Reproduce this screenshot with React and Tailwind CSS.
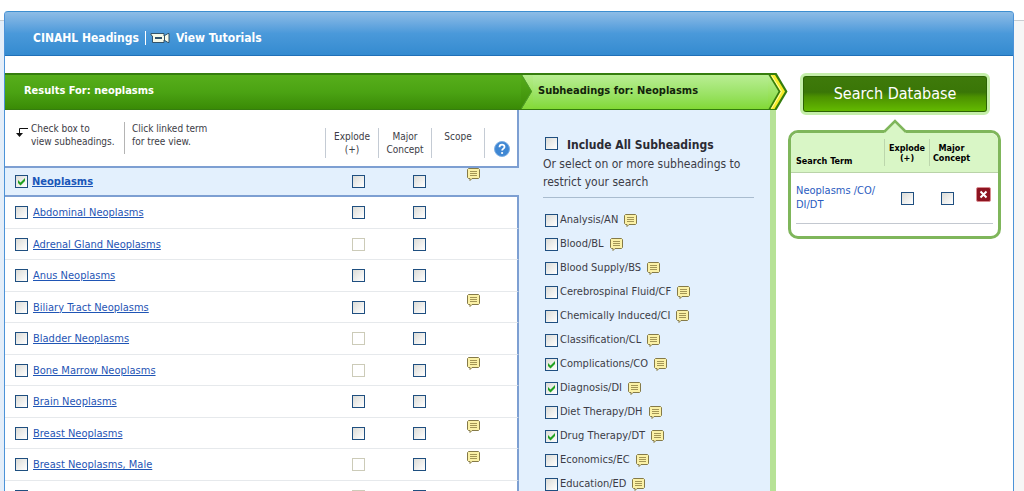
import React, { useState } from "react";

const results = [
  { name: "Abdominal Neoplasms", explode: true },
  { name: "Adrenal Gland Neoplasms" },
  { name: "Anus Neoplasms", explode: true },
  { name: "Biliary Tract Neoplasms", explode: true, scope: true },
  { name: "Bladder Neoplasms" },
  { name: "Bone Marrow Neoplasms", scope: true },
  { name: "Brain Neoplasms", explode: true },
  { name: "Breast Neoplasms", explode: true, scope: true },
  { name: "Breast Neoplasms, Male", scope: true },
  { name: "Bronchial Neoplasms" },
];

const subheadings = [
  { name: "Analysis/AN" },
  { name: "Blood/BL" },
  { name: "Blood Supply/BS" },
  { name: "Cerebrospinal Fluid/CF" },
  { name: "Chemically Induced/CI" },
  { name: "Classification/CL" },
  { name: "Complications/CO", checked: true },
  { name: "Diagnosis/DI", checked: true },
  { name: "Diet Therapy/DH" },
  { name: "Drug Therapy/DT", checked: true },
  { name: "Economics/EC" },
  { name: "Education/ED" },
];

function Check({ id, label, checked = false, disabled = false }) {
  const [on, setOn] = useState(checked);
  return (
    <span className="relative block size-[13px] shrink-0">
      <input
        id={id}
        type="checkbox"
        aria-label={label}
        checked={on}
        disabled={disabled}
        onChange={() => setOn(!on)}
        className="block size-[13px] appearance-none border border-[#1f4f80] bg-linear-to-br from-[#dcdcd7] to-white disabled:border-[#cccbb8] disabled:bg-white disabled:bg-none"
      />
      {on && (
        <svg viewBox="0 0 13 13" className="pointer-events-none absolute inset-0 size-[13px]">
          <path d="M3 5v3l2.5 2.5L10 6V3L5.500 7.500z" fill="#21a121" />
        </svg>
      )}
    </span>
  );
}

function NoteIcon() {
  return (
    <svg viewBox="0 0 13 13" className="block size-[13px] shrink-0">
      <path d="M1.500.5h10l1 1v8l-1 1H5L3 12.500V10.500H1.500l-1-1v-8z" fill="#fbf1a6" stroke="#857a48" />
      <path d="M3 3.500h7M3 5.500h7M3 7.500h7" stroke="#a39555" />
    </svg>
  );
}

function ScopeLink({ name }) {
  return (
    <a href="#scope" aria-label={"Scope note for " + name} className="block">
      <NoteIcon />
    </a>
  );
}

function HelpIcon() {
  return (
    <svg viewBox="0 0 16 16" className="block size-4">
      <circle cx="8" cy="8" r="7.500" fill="#3f87d3" stroke="#7fb0e4" />
      <path d="M5.500 6.200C5.500 2.800 10.700 3 10.500 6c-.1 1.600-2.400 1.700-2.400 3.600" fill="none" stroke="#fff" strokeWidth="1.800" />
      <circle cx="8.100" cy="12" r="1.100" fill="#fff" />
    </svg>
  );
}

function TopBar() {
  return (
    <header className="flex h-[45px] items-center rounded-t-[3px] border-t border-b border-t-[#3c8ed0] border-b-[#2070b8] bg-linear-to-b from-[#8dbce6] via-[#4a99da] via-50% to-[#348bd0] pt-2 pl-7 text-[12px] font-bold text-white">
      <h1>CINAHL Headings</h1>
      <span className="ml-1.5 h-3.5 w-px bg-white" />
      <a href="#tutorials" className="ml-1 flex items-center gap-1.5">
        <svg viewBox="0 0 20 12" className="h-3 w-5">
          <path d="M1 1.500h13V4l4-2.500h1v9h-1L14 8v2.500H2.500V4L1 3z" fill="#f4f8e8" stroke="#31536b" />
          <path d="M5 6h7" stroke="#31536b" strokeWidth="2" />
          <path d="M14.500 3v6" stroke="#31536b" />
        </svg>
        View Tutorials
      </a>
    </header>
  );
}

function StepBar() {
  return (
    <div className="flex h-[37px] text-[11px] font-bold">
      <h2 className="flex flex-1 items-center border-t-2 border-b border-t-[#357d0e] border-b-[#357d0e] bg-linear-to-b from-[#57ae1b] from-0% via-[#4ba313] via-50% to-[#3a8b06] pb-0.5 pl-[19px] text-white">
        Results For: neoplasms
      </h2>
      <svg viewBox="0 0 12 37" className="h-[37px] w-3 shrink-0">
        <defs>
          <linearGradient id="light" x2="0" y2="1">
            <stop offset="0" stopColor="#b9ee93" />
            <stop offset="1" stopColor="#82d934" />
          </linearGradient>
          <linearGradient id="dark" x2="0" y2="1">
            <stop offset="0" stopColor="#57ae1b" />
            <stop offset="1" stopColor="#3a8b06" />
          </linearGradient>
        </defs>
        <path d="M0 0h12v37H0z" fill="url(#light)" />
        <path d="M0 0L11 18.500L0 37z" fill="url(#dark)" />
        <path d="M0 1L10.500 18.500L0 36" fill="none" stroke="#4f9d2a" />
        <path d="M0 1h12" stroke="#357d0e" strokeWidth="2" />
        <path d="M0 36.500h12" stroke="#357d0e" />
      </svg>
      <h2 className="flex w-[235px] items-center border-t-2 border-b border-t-[#357d0e] border-b-[#357d0e] bg-linear-to-b from-[#b9ee93] to-[#82d934] pb-0.5 pl-[5px] text-[#12230a]">
        Subheadings for: Neoplasms
      </h2>
      <svg viewBox="0 0 20 37" className="h-[37px] w-5 shrink-0">
        <path d="M0 0h8.500L19.500 18.500L8.500 37H0z" fill="#357d0e" />
        <path d="M0 2h.5L10.500 18.500L.5 36H0z" fill="url(#light)" />
        <path d="M2.500 2h4.500L17 18.500L6.500 36H2.500L12.500 18.500z" fill="#f7ec2a" />
        <path d="M3.500 2.500L13.500 18.500L3.500 35.500" fill="none" stroke="#fdfbb0" />
      </svg>
    </div>
  );
}

function ResultsTable() {
  const head = "pt-[18px] pb-2 align-top font-normal";
  return (
    <table className="w-full flex-1 table-fixed border-separate border-spacing-0 self-start text-left text-[10px] leading-[13px] text-[#3c3c46]">
      <colgroup>
        <col />
        <col className="w-[53px]" />
        <col className="w-[53px]" />
        <col className="w-[53px]" />
        <col className="w-[35px]" />
      </colgroup>
      <thead>
        <tr className="h-[56px]">
          <th className="pt-3 align-top font-normal">
            <div className="flex pl-[10px]">
              <svg viewBox="0 0 14 14" className="mt-1 size-3.5 shrink-0">
                <path d="M13 2.500H4.500V8" fill="none" stroke="#111" />
                <path d="M1 7h7L4.500 11z" fill="#111" />
              </svg>
              <p className="h-8 w-[96px] border-r border-[#b4b4b4] pl-0.5 whitespace-nowrap">
                Check box to
                <br />
                view subheadings.
              </p>
              <p className="pl-[7px]">
                Click linked term
                <br />
                for tree view.
              </p>
            </div>
          </th>
          <th className={head}>
            <div className="h-[30px] border-l border-[#c4cbd4] px-1 pt-0.5 text-center">
              Explode
              <br />
              (+)
            </div>
          </th>
          <th className={head}>
            <div className="h-[30px] border-l border-[#c4cbd4] px-1 pt-0.5 text-center">
              Major
              <br />
              Concept
            </div>
          </th>
          <th className={head}>
            <div className="h-[30px] border-l border-[#c4cbd4] pt-0.5 text-center">Scope</div>
          </th>
          <th className="border-r-2 border-[#7d9fd2] pt-[18px] align-top">
            <div className="h-[30px] border-l border-[#c4cbd4] pt-[13px] pl-[9px]">
              <button type="button" aria-label="Help" className="block">
                <HelpIcon />
              </button>
            </div>
          </th>
        </tr>
      </thead>
      <tbody>
        <tr className="h-[31px] bg-[#e3f0fd] *:border-y-2 *:border-[#7d9fd2]">
          <td>
            <div className="flex items-center gap-1 pl-[10px]">
              <Check label="Select Neoplasms" checked />
              <a href="#neoplasms" className="text-[11px] font-bold text-[#1a56b8] underline">
                Neoplasms
              </a>
            </div>
          </td>
          <td className="pl-[27px]">
            <Check label="Explode Neoplasms" />
          </td>
          <td className="pl-[35px]">
            <Check label="Major concept Neoplasms" />
          </td>
          <td className="pl-[36px] align-top">
            <ScopeLink name="Neoplasms" />
          </td>
          <td />
        </tr>
        {results.map((r) => (
          <tr key={r.name} className="h-[31px] even:h-[32px] *:border-b *:border-[#e6e9ec]">
            <td>
              <div className="flex items-center gap-[5px] pl-[10px]">
                <Check label={"Select " + r.name} />
                <a href="#term" className="text-[11px] text-[#1f55b5] underline">
                  {r.name}
                </a>
              </div>
            </td>
            <td className="pl-[27px]">
              <Check label={"Explode " + r.name} disabled={!r.explode} />
            </td>
            <td className="pl-[35px]">
              <Check label={"Major concept " + r.name} />
            </td>
            <td className="pt-0.5 pl-[36px] align-top">{r.scope && <ScopeLink name={r.name} />}</td>
            <td className="border-r-2 border-r-[#7d9fd2]!" />
          </tr>
        ))}
      </tbody>
    </table>
  );
}

function Subheadings() {
  return (
    <section className="w-[257px] shrink-0 border-r-[6px] border-[#b6e296] bg-[#e3f0fd] pt-[27px] pr-4 pl-6 text-[11px] text-[#3c3c46]">
      <div className="flex gap-[9px] pl-0.5">
        <Check id="include-all" />
        <label htmlFor="include-all" className="text-[12px] leading-4 font-bold text-[#2a2a33]">
          Include All Subheadings
        </label>
      </div>
      <p className="border-b border-[#a9bccf] pt-0.5 pb-1.5 text-[12px] leading-[18px]">
        Or select on or more subheadings to restrict your search
      </p>
      <ul className="pt-[10px] pl-0.5">
        {subheadings.map((s) => (
          <li key={s.name} className="flex h-6 items-center">
            <Check id={s.name} checked={s.checked} />
            <label htmlFor={s.name} className="pr-1.5 pl-0.5">
              {s.name}
            </label>
            <ScopeLink name={s.name} />
          </li>
        ))}
      </ul>
    </section>
  );
}

function SearchPanel() {
  return (
    <aside className="w-[225px] shrink-0 pr-3">
      <div className="pl-3">
        <button
          type="button"
          className="h-[42px] w-[190px] rounded-md border-[3px] border-[#c5efaa] bg-[linear-gradient(#3f7a0b,#3a7607_45%,#4c9100_58%,#65bd00)] text-[16px] text-white inset-ring inset-ring-[#2c6204]"
        >
          Search Database
        </button>
      </div>
      <div className="relative mt-[15px] rounded-[10px] border-[3px] border-[#7fb65b] bg-white pb-3">
        <svg viewBox="0 0 24 15" className="absolute -top-[14px] left-[92px] h-[15px] w-6">
          <path d="M1 13L12 2L23 13V15H1z" fill="#d9f6c6" />
          <path d="M1 13L12 2L23 13" fill="none" stroke="#7fb65b" strokeWidth="2.500" />
        </svg>
        <table className="w-full table-fixed border-separate border-spacing-0 text-left">
          <colgroup>
            <col />
            <col className="w-[45px]" />
            <col className="w-[44px]" />
            <col className="w-[25px]" />
          </colgroup>
          <thead>
            <tr className="h-[40px] text-[9px] leading-[10px] text-black *:border-b *:border-[#b9d3a8] *:bg-[#d9f6c6]">
              <th className="rounded-tl-lg pb-1.5 pl-[5px] align-bottom">Search Term</th>
              <th className="text-center">
                <div className="h-[27px] border-l border-[#bcd6ac] pt-1">Explode (+)</div>
              </th>
              <th className="text-center">
                <div className="h-[27px] border-l border-[#bcd6ac] pt-1">Major Concept</div>
              </th>
              <th className="rounded-tr-lg" />
            </tr>
          </thead>
          <tbody>
            <tr className="h-[50px] text-[11px] leading-[14px] text-[#2a5cc0]">
              <td className="pl-[5px]">
                Neoplasms /CO/
                <br />
                DI/DT
              </td>
              <td className="pl-[17px]">
                <Check label="Explode search term" />
              </td>
              <td className="pl-3">
                <Check label="Major concept search term" />
              </td>
              <td className="pt-3.5 align-top">
                <button
                  type="button"
                  aria-label="Remove term"
                  className="ml-[3px] block size-[15px] rounded-xs border border-[#d98d92] bg-[#8d1420]"
                >
                  <svg viewBox="0 0 13 13" className="block size-[13px]">
                    <path d="M3.500 3.500l6 6M9.500 3.500L3.500 9.500" stroke="#fff" strokeWidth="2" />
                  </svg>
                </button>
              </td>
            </tr>
          </tbody>
        </table>
        <hr className="mx-[5px] border-[#c3c8d0]" />
      </div>
    </aside>
  );
}

export default function App() {
  return (
    <div className="h-screen overflow-hidden bg-white pt-5 font-['DejaVu_Sans_Condensed','DejaVu_Sans',sans-serif]">
      <div className="h-full border-t border-[#c9cdd2] bg-linear-to-r from-[#e4eef9] from-50% to-[#f6f6f6] to-50% pr-[10px] pl-1">
        <div className="relative -mt-[10px] flex min-h-screen flex-col rounded-t-[4px] border-x border-[#4c93d8] bg-white">
          <TopBar />
          <main className="flex flex-1 pt-[17px]">
            <div className="flex flex-1 flex-col">
              <StepBar />
              <div className="flex flex-1 pr-3">
                <ResultsTable />
                <Subheadings />
              </div>
            </div>
            <SearchPanel />
          </main>
        </div>
      </div>
    </div>
  );
}
